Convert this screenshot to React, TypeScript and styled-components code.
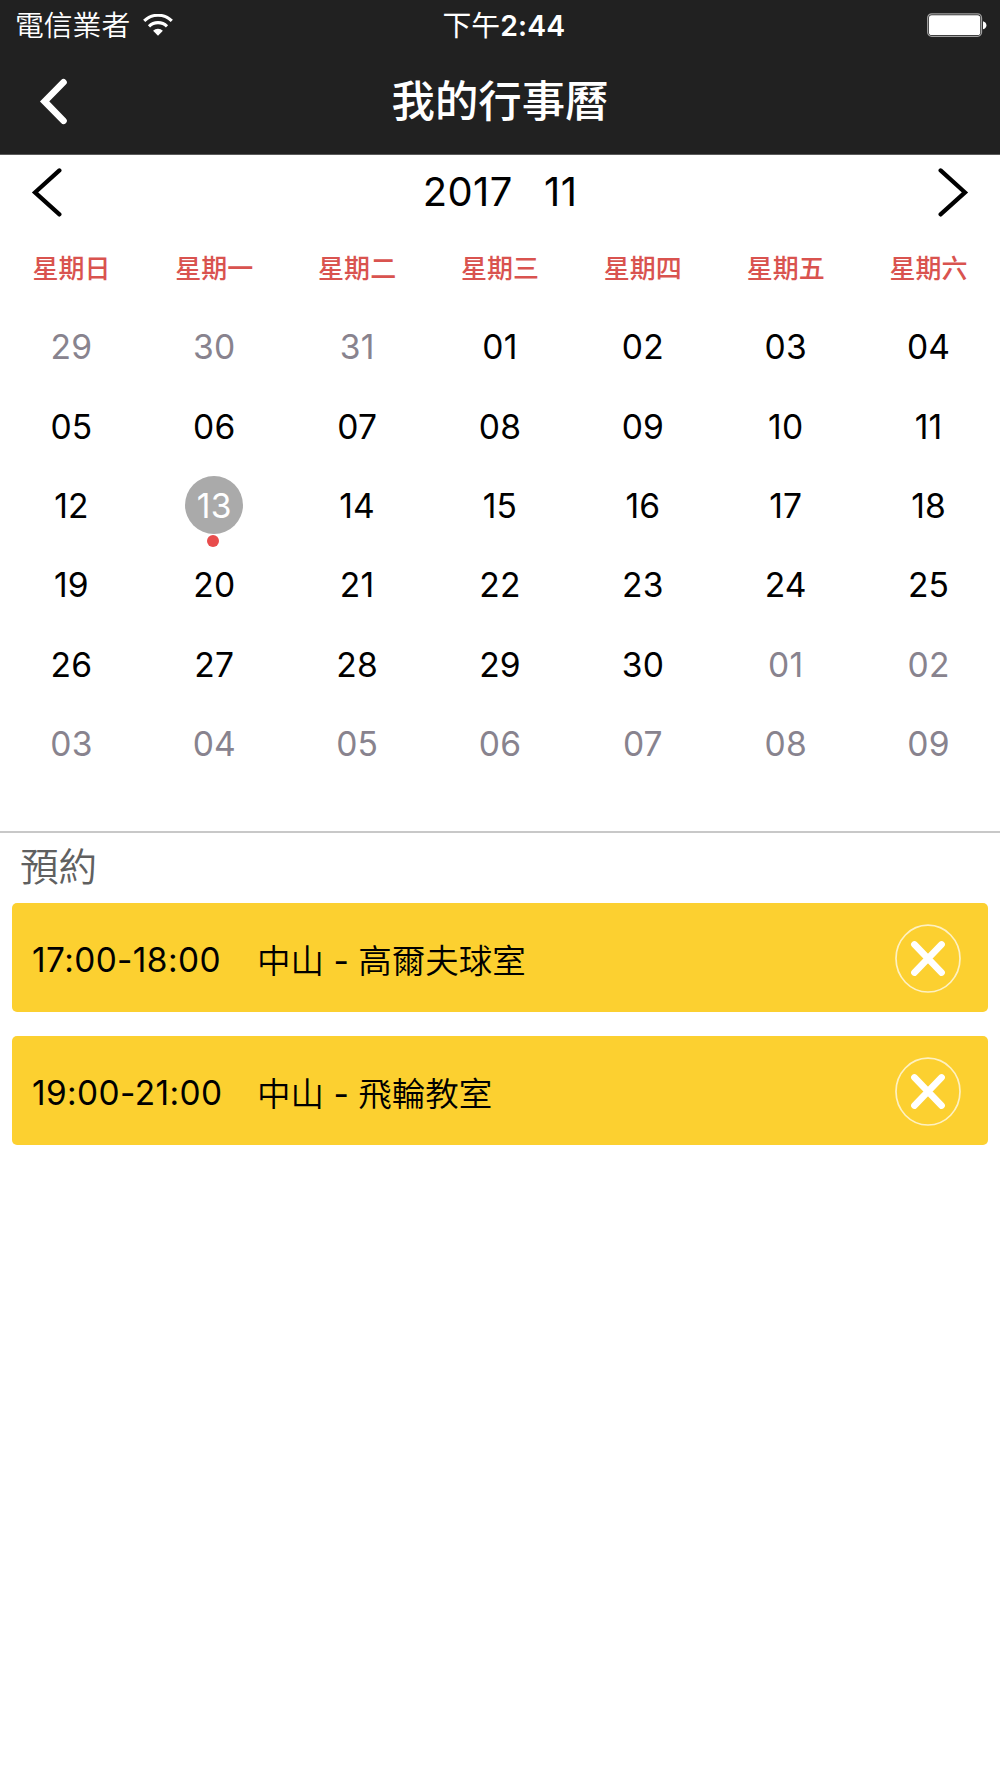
import React from "react";
import styled, { createGlobalStyle } from "styled-components";

const GlobalStyle = createGlobalStyle`
  * { box-sizing: border-box; }
  body {
    margin: 0;
    background: #fff;
    font-family: Inter, "Noto Sans CJK TC", sans-serif;
    color: #000;
  }
  button { border: 0; padding: 0; background: none; display: flex; }
`;

const Screen = styled.main`
  width: 1000px;
  height: 1778px;
  display: flex;
  flex-direction: column;
  overflow: hidden;
  background: #fff;
`;

const Header = styled.header`
  height: 155px;
  flex: none;
  background: #212121;
  border-bottom: 1px solid #5a5a5a;
  color: #fff;
`;

const StatusBar = styled.div`
  height: 50px;
  display: grid;
  grid-template-columns: 1fr auto 1fr;
  align-items: center;
  padding: 0 13px 0 15px;
  font-size: 28.8px;
  line-height: 50px;
`;

const Carrier = styled.div`
  display: flex;
  align-items: center;
  gap: 13px;
  font-weight: 350;
`;

const CarrierName = styled.span`
  padding-top: 1px;
`;

const Clock = styled.div`
  display: flex;
  padding: 1px 0 0 6px;
`;

const ClockDigits = styled.span`
  font-size: 28.4px;
  font-weight: 600;
  letter-spacing: 0.2px;
`;

const Battery = styled.div`
  display: flex;
  justify-content: flex-end;
`;

const NavBar = styled.div`
  height: 102px;
  display: grid;
  grid-template-columns: 100px 1fr 100px;
  align-items: center;
`;

const BackButton = styled.button`
  margin-left: 36px;
`;

const Title = styled.h1`
  margin: 0;
  text-align: center;
  font-size: 43.4px;
  font-weight: 500;
  line-height: 102px;
`;

const MonthBar = styled.div`
  height: 74px;
  flex: none;
  display: flex;
  justify-content: space-between;
  align-items: center;
  padding: 0 31px;
`;

const MonthLabel = styled.div`
  display: flex;
  gap: 31px;
  font-size: 39.9px;
  letter-spacing: 0.5px;
  line-height: 74px;
`;

const Week = styled.div`
  display: grid;
  grid-template-columns: repeat(7, 1fr);
`;

const Weekday = styled.div`
  height: 78px;
  line-height: 79px;
  text-align: center;
  font-size: 26px;
  font-weight: 500;
  color: #d9534f;
`;

const Month = styled.section`
  height: 524px;
  flex: none;
`;

const Day = styled.div<{ $muted?: boolean }>`
  height: 79.4px;
  display: flex;
  align-items: center;
  justify-content: center;
  position: relative;
  font-size: 33.6px;
  letter-spacing: 0.2px;
  color: ${(p) => (p.$muted ? "#88838e" : "#000")};
`;

const Selected = styled.span`
  width: 58px;
  height: 58px;
  border-radius: 50%;
  background: #aaa;
  color: #fff;
  display: flex;
  align-items: center;
  justify-content: center;
`;

const EventDot = styled.i`
  position: absolute;
  left: 64px;
  top: 69px;
  width: 12px;
  height: 12px;
  border-radius: 50%;
  background: #e84c4c;
`;

const Bookings = styled.section`
  border-top: 2px solid #c8c8c8;
  padding: 0 12px;
`;

const BookingsTitle = styled.h2`
  margin: 0;
  padding-left: 8px;
  height: 70.4px;
  line-height: 68px;
  font-size: 38.6px;
  font-weight: 350;
  color: #606060;
`;

const Card = styled.article`
  height: 108.6px;
  margin-bottom: 24.4px;
  border-radius: 5px;
  background: #fcd030;
  display: flex;
  align-items: center;
  padding: 0 27px 0 20px;
  font-size: 33.4px;
`;

const Time = styled.time`
  width: 225px;
  padding-top: 4px;
  letter-spacing: 0.4px;
  white-space: nowrap;
`;

const Place = styled.div`
  flex: 1;
  padding-top: 1px;
  font-size: 33.5px;
  font-weight: 350;
  white-space: nowrap;
`;

const Dash = styled.span`
  font-weight: 400;
`;

const WEEKDAYS = ["日", "一", "二", "三", "四", "五", "六"];

const DAYS = [29, 30, 31]
  .map((n) => ({ n, muted: true }))
  .concat(Array.from({ length: 30 }, (_, i) => ({ n: i + 1, muted: false })))
  .concat(Array.from({ length: 9 }, (_, i) => ({ n: i + 1, muted: true })));

const BOOKINGS = [
  { time: "17:00-18:00", branch: "中山", room: "高爾夫球室" },
  { time: "19:00-21:00", branch: "中山", room: "飛輪教室" },
];

const WifiIcon = () => (
  <svg width="30" height="24" viewBox="0 0 30 24" fill="none" stroke="#fff" strokeWidth="3.1">
    <path d="M1.2 6.9a19.6 19.6 0 0 1 27.6 0" />
    <path d="M6 12.3a12.8 12.8 0 0 1 18 0" />
    <path d="M15 21.8l-4.9-5a6.9 6.9 0 0 1 9.8 0z" fill="#fff" stroke="none" />
  </svg>
);

const BatteryIcon = () => (
  <svg width="60" height="25" viewBox="0 0 60 25">
    <rect x="0.7" y="0.9" width="53.8" height="22.4" rx="4" fill="none" stroke="#a0a0a0" strokeWidth="1.3" />
    <rect x="2" y="2.2" width="51.2" height="19.8" rx="2.6" fill="#fff" />
    <path d="M56 8.2q3.4 1 3.4 4t-3.4 4z" fill="#fff" />
  </svg>
);

const BackIcon = () => (
  <svg width="32" height="50" viewBox="0 0 32 50" fill="none" stroke="#fff" strokeWidth="6.6" strokeLinecap="round">
    <path d="M27.5 6.3L8.6 25.4 27.5 44.8" />
  </svg>
);

const MonthArrow = ({ next }: { next?: boolean }) => (
  <svg width="32" height="50" viewBox="0 0 32 50" fill="none" stroke="#000" strokeWidth="4.2" strokeLinecap="round">
    <path d={next ? "M3.6 3.4L28 25.4 3.6 47.4" : "M28.4 3.4L4 25.4 28.4 47.4"} />
  </svg>
);

const CancelIcon = () => (
  <svg width="66" height="70" viewBox="0 0 66 70" fill="none" stroke="#fff">
    <ellipse cx="33" cy="35.6" rx="32" ry="33.4" strokeWidth="1.7" opacity="0.7" />
    <path d="M19.4 21.4l27.2 28.2M46.6 21.4L19.4 49.6" strokeWidth="6.6" strokeLinecap="round" />
  </svg>
);

export default function App() {
  return (
    <Screen>
      <GlobalStyle />
      <Header>
        <StatusBar>
          <Carrier>
            <CarrierName>電信業者</CarrierName>
            <WifiIcon />
          </Carrier>
          <Clock>
            下午<ClockDigits>2:44</ClockDigits>
          </Clock>
          <Battery>
            <BatteryIcon />
          </Battery>
        </StatusBar>
        <NavBar>
          <BackButton aria-label="返回">
            <BackIcon />
          </BackButton>
          <Title>我的行事曆</Title>
        </NavBar>
      </Header>
      <MonthBar>
        <button>
          <MonthArrow />
        </button>
        <MonthLabel>
          <span>2017</span>
          <span>11</span>
        </MonthLabel>
        <button>
          <MonthArrow next />
        </button>
      </MonthBar>
      <Week>
        {WEEKDAYS.map((d) => (
          <Weekday key={d}>星期{d}</Weekday>
        ))}
      </Week>
      <Month>
        <Week>
          {DAYS.map(({ n, muted }, i) => {
            const label = String(n).padStart(2, "0");
            const selected = !muted && n === 13;
            return (
              <Day key={i} $muted={muted}>
                {selected ? <Selected>{label}</Selected> : label}
                {selected && <EventDot />}
              </Day>
            );
          })}
        </Week>
      </Month>
      <Bookings>
        <BookingsTitle>預約</BookingsTitle>
        {BOOKINGS.map((b) => (
          <Card key={b.time}>
            <Time>{b.time}</Time>
            <Place>
              {b.branch}
              <Dash> - </Dash>
              {b.room}
            </Place>
            <button>
              <CancelIcon />
            </button>
          </Card>
        ))}
      </Bookings>
    </Screen>
  );
}
